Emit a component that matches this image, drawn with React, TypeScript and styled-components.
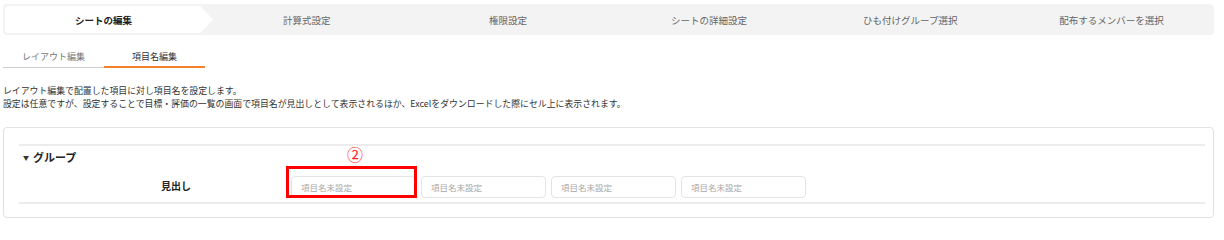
import styled, { createGlobalStyle } from 'styled-components'

const GlobalStyle = createGlobalStyle`
	body {
		margin: 0;
		background: #ffffff;
		font-family: "Noto Sans CJK JP", "Noto Sans", sans-serif;
		color: #333333;
	}
`

const Page = styled.div`
	padding: 4px 10px 0 3px;
`

const Stepper = styled.div`
	display: grid;
	grid-template-columns: repeat(6, 1fr);
	padding: 2px;
	background: #f3f3f3;
	border-radius: 4px;
`

const Step = styled.div<{ $active?: boolean }>`
	position: relative;
	height: 27px;
	display: flex;
	align-items: center;
	justify-content: center;
	font-size: 9.5px;
	color: ${(p) => (p.$active ? '#222222' : '#666666')};
	font-weight: ${(p) => (p.$active ? 700 : 400)};

	&::before {
		content: '';
		display: ${(p) => (p.$active ? 'block' : 'none')};
		position: absolute;
		top: 0;
		bottom: 0;
		left: 0;
		right: -7px;
		background: #ffffff;
		border-radius: 3px;
		clip-path: polygon(0 0, calc(100% - 13px) 0, 100% 50%, calc(100% - 13px) 100%, 0 100%);
	}

	span {
		position: relative;
		margin-right: ${(p) => (p.$active ? '4px' : '0')};
	}
`

const Tabs = styled.div`
	display: flex;
	margin-top: 10px;
`

const Tab = styled.div<{ $active?: boolean }>`
	width: 101px;
	height: 23px;
	display: flex;
	align-items: center;
	justify-content: center;
	font-size: 9px;
	color: ${(p) => (p.$active ? '#333333' : '#777777')};
	box-shadow: ${(p) => (p.$active ? 'inset 0 -2px #f5822a' : 'inset 0 -1px #cccccc')};
`

const Description = styled.div`
	margin-top: 16px;
	font-size: 8.9px;
	line-height: 13px;
	color: #333333;
`

const Card = styled.div`
	margin-top: 17px;
	border: 1px solid #e2e2e2;
	border-radius: 4px;
	padding: 16px 8px 13px 15px;
`

const Group = styled.div`
	border-top: 2px solid #ececec;
	border-bottom: 2px solid #ececec;
`

const GroupHeader = styled.div`
	height: 22px;
	display: flex;
	align-items: center;
	gap: 4px;
	padding-left: 4px;
	font-size: 11px;
	font-weight: 700;
	color: #222222;
`

const Caret = styled.span`
	font-size: 6px;
	color: #333333;
`

const FieldRow = styled.div`
	height: 34px;
	display: flex;
	align-items: center;
	padding-left: 42px;
`

const FieldLabel = styled.div`
	width: 230px;
	text-align: center;
	font-size: 10px;
	font-weight: 700;
	color: #222222;
`

const Inputs = styled.div`
	display: flex;
	gap: 5px;
`

const InputWrap = styled.div`
	position: relative;
`

const NameInput = styled.input`
	box-sizing: border-box;
	width: 125px;
	height: 22px;
	border: 1px solid #e4e4e4;
	border-radius: 4px;
	padding: 0 9px;
	font-family: "Noto Sans CJK JP", "Noto Sans", sans-serif;
	font-size: 8.5px;
	color: #333333;
	background: #ffffff;
	outline: none;

	&::placeholder {
		color: #a8a8a8;
	}
`

const Highlight = styled.div`
	position: absolute;
	top: -6px;
	left: -5px;
	width: 131px;
	height: 32px;
	box-sizing: border-box;
	border: 3px solid #ff0000;
	pointer-events: none;
`

const Marker = styled.div`
	position: absolute;
	top: -27px;
	left: 56px;
	font-size: 16px;
	line-height: 18px;
	color: #ff2020;
`

const steps = [
	'シートの編集',
	'計算式設定',
	'権限設定',
	'シートの詳細設定',
	'ひも付けグループ選択',
	'配布するメンバーを選択',
]

const App = () => {
	return (
		<Page>
			<GlobalStyle />
			<Stepper>
				{steps.map((name, i) => (
					<Step key={name} $active={i === 0}>
						<span>{name}</span>
					</Step>
				))}
			</Stepper>

			<Tabs>
				<Tab>レイアウト編集</Tab>
				<Tab $active>項目名編集</Tab>
			</Tabs>

			<Description>
				<div>レイアウト編集で配置した項目に対し項目名を設定します。</div>
				<div>
					設定は任意ですが、設定することで目標・評価の一覧の画面で項目名が見出しとして表示されるほか、Excelをダウンロードした際にセル上に表示されます。
				</div>
			</Description>

			<Card>
				<Group>
					<GroupHeader>
						<Caret>▼</Caret>
						グループ
					</GroupHeader>
					<FieldRow>
						<FieldLabel>見出し</FieldLabel>
						<Inputs>
							{[0, 1, 2, 3].map((i) => (
								<InputWrap key={i}>
									<NameInput placeholder="項目名未設定" />
									{i === 0 && (
										<>
											<Highlight />
											<Marker>②</Marker>
										</>
									)}
								</InputWrap>
							))}
						</Inputs>
					</FieldRow>
				</Group>
			</Card>
		</Page>
	)
}

export default App
